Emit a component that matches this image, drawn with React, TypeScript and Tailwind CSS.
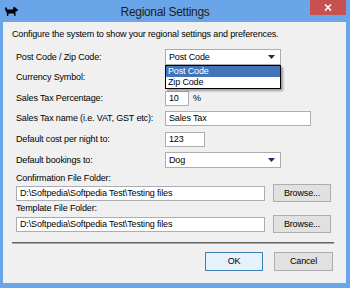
import React from 'react';

const ui = "font-['Liberation_Sans',Arial,sans-serif] text-[9px] tracking-[-0.15px] text-black leading-none";

const Arrow = () => (
  <svg width="7" height="4" viewBox="0 0 7 4">
    <polygon points="0,0 7,0 3.5,4" fill="#1c2a6b" />
  </svg>
);

const ComboBox: React.FC<{ value?: string; open?: boolean }> = ({ value = '', open = false }) => (
  <div className="relative">
    <div className="w-[116px] h-[16px] bg-white border border-[#acacac] flex items-center justify-between pl-[3px] pr-[5px]">
      <span>{value}</span>
      <Arrow />
    </div>
    {open && (
      <div className="absolute left-0 top-[16px] z-10 w-[116px] bg-white border border-black shadow-[2px_2px_2px_rgba(0,0,0,0.35)]">
        <div className="h-[11px] bg-[#4174b8] text-white flex items-center pl-[2px]">Post Code</div>
        <div className="h-[11px] flex items-center pl-[2px]">Zip Code</div>
      </div>
    )}
  </div>
);

const TextBox: React.FC<{ value?: string; className?: string }> = ({ value = '', className = '' }) => (
  <div className={`h-[15px] bg-white border border-[#abadb3] flex items-center pl-[3px] ${className}`}>
    {value}
  </div>
);

const Button: React.FC<{ label: string; className?: string; primary?: boolean }> = ({ label, className = '', primary = false }) => (
  <div
    className={`flex items-center justify-center border ${
      primary ? 'bg-[#e5f1fb] border-[#3c7fb1]' : 'bg-[#e1e1e1] border-[#adadad]'
    } ${className}`}
  >
    {label}
  </div>
);

const Row: React.FC<{ label: string; h: string; children?: React.ReactNode }> = ({ label, h, children }) => (
  <div className={`flex items-center ${h}`}>
    <div className="w-[149px] shrink-0">{label}</div>
    {children}
  </div>
);

export default function App() {
  return (
    <div className="w-[350px] h-[288px] bg-[#6aa5e9] flex flex-col overflow-hidden">
      {/* title bar */}
      <div className="h-[22px] flex items-start shrink-0">
        <div className="w-[20px] h-[22px] flex items-center justify-end pr-[2px] pt-[1px]">
          <svg width="13" height="11" viewBox="0 0 13 11">
            <path
              d="M0 2 L1 1 L2.5 3.5 L8 3.5 L8.5 0.5 L9.5 1.5 L10 0.5 L10.5 2 L13 3.5 L12.5 5 L10.5 5.5 L10.5 10 L9.3 10 L9 7.5 L3.5 7.5 L3.2 10 L2 10 L1.8 6.5 L0.5 5 Z"
              fill="#000"
            />
          </svg>
        </div>
        <div className="flex-1 h-[22px] flex items-center justify-center pt-[2px] font-['Liberation_Sans',Arial,sans-serif] text-[12px] tracking-[-0.3px] text-[#1e1e1e]">
          Regional Settings
        </div>
        <div className="w-[36px] h-[15px] bg-[#c75050] flex items-center justify-center mr-[4px]">
          <svg width="8" height="7" viewBox="0 0 8 7">
            <path d="M1 0.5 L7 6.5 M7 0.5 L1 6.5" stroke="#fff" strokeWidth="1.6" />
          </svg>
        </div>
      </div>

      {/* client area */}
      <div className={`ml-[3px] mr-[4px] h-[261px] bg-[#f0f0f0] pl-[13px] flex flex-col ${ui}`}>
        <div className="h-[12px] mt-[6px] -ml-[4px] flex items-center">
          Configure the system to show your regional settings and preferences.
        </div>

        <div className="mt-[7px] flex flex-col">
          <Row label="Post Code / Zip Code:" h="h-[20px]">
            <ComboBox value="Post Code" open />
          </Row>
          <Row label="Currency Symbol:" h="h-[21px]">
            <ComboBox />
          </Row>
          <Row label="Sales Tax Percentage:" h="h-[20px]">
            <TextBox value="10" className="w-[24px]" />
            <span className="ml-[4px]">%</span>
          </Row>
          <Row label="Sales Tax name (i.e. VAT, GST etc):" h="h-[21px]">
            <TextBox value="Sales Tax" className="w-[146px]" />
          </Row>
          <Row label="Default cost per night to:" h="h-[21px]">
            <TextBox value="123" className="w-[40px]" />
          </Row>
          <Row label="Default bookings to:" h="h-[20px]">
            <ComboBox value="Dog" />
          </Row>
        </div>

        <div className="h-[12px] mt-[2px] flex items-center">Confirmation File Folder:</div>
        <div className="h-[18px] flex items-center">
          <TextBox value="D:\Softpedia\Softpedia Test\Testing files" className="w-[249px]" />
          <Button label="Browse..." className="w-[58px] h-[18px] ml-[8px]" />
        </div>

        <div className="h-[13px] flex items-center">Template File Folder:</div>
        <div className="h-[18px] flex items-center">
          <TextBox value="D:\Softpedia\Softpedia Test\Testing files" className="w-[249px]" />
          <Button label="Browse..." className="w-[58px] h-[18px] ml-[8px]" />
        </div>

        <div className="mt-[9px] -ml-[4px] mr-[12px] border-t border-[#646464] border-b border-b-[#a8a8a8]" />

        <div className="mt-[8px] flex justify-end pr-[13px]">
          <Button label="OK" primary className="w-[58px] h-[19px]" />
          <Button label="Cancel" className="w-[59px] h-[19px] ml-[11px]" />
        </div>
      </div>
    </div>
  );
}
